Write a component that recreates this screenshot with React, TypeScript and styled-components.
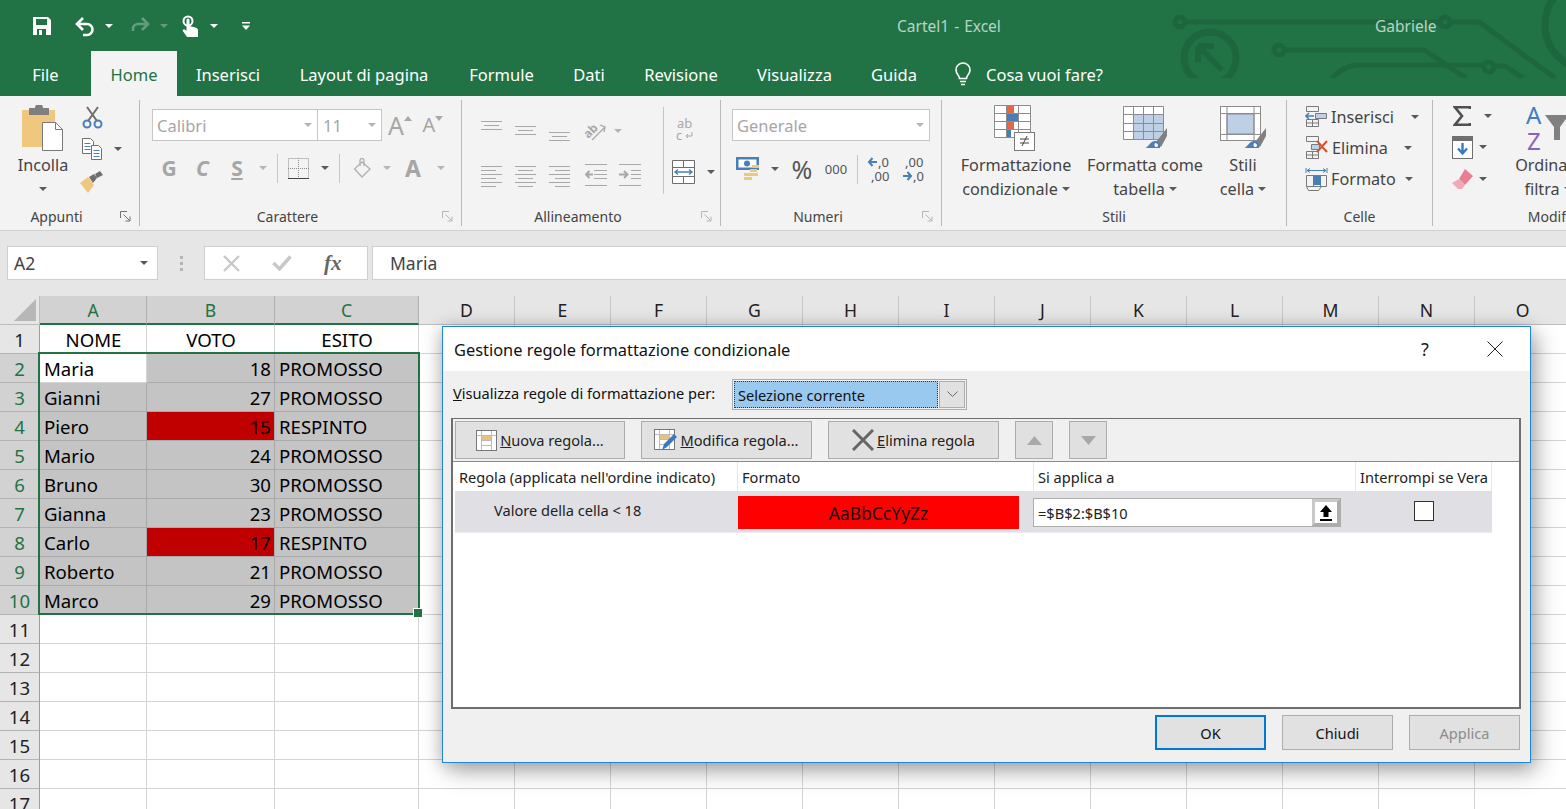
import React from "react";
import styled, { createGlobalStyle } from "styled-components";

const FONT = `"Noto Sans", "Open Sans", sans-serif`;
const GREEN = "#217346";
const GRID = "#d4d4d4";

const Global = createGlobalStyle`
  html, body { margin: 0; padding: 0; background: #fff; overflow: hidden; }
  * { box-sizing: border-box; }
  body { font-family: ${FONT}; }
`;

const Page = styled.div`
  position: relative; width: 1566px; height: 809px; overflow: hidden; background: #fff; color: #444;
`;

/* ---------- header ---------- */
const Header = styled.header`
  position: relative; height: 96px; background: ${GREEN}; color: #fff; overflow: hidden;
`;
const CircuitArt = styled.svg`
  position: absolute; left: 1160px; top: 0; width: 406px; height: 78px; pointer-events: none;
`;
const TitleRow = styled.div`
  position: relative; height: 51px; display: flex; align-items: center; padding-left: 32px;
`;
const QatSlot = styled.div<{ $w: number; $faded?: boolean }>`
  width: ${(p) => p.$w}px; display: flex; align-items: center; justify-content: flex-start;
  opacity: ${(p) => (p.$faded ? 0.3 : 1)};
`;
const DocTitle = styled.div`
  margin-left: 642px; width: 300px; font-size: 15.5px; color: #b9d3c3; white-space: nowrap; word-spacing: 1px;
`;
const UserName = styled.div`
  margin-left: 178px; font-size: 15.5px; color: #b9d3c3; white-space: nowrap;
`;
const TabRow = styled.nav`
  position: relative; height: 45px; display: flex; align-items: stretch;
`;
const Tab = styled.div<{ $w: number; $active?: boolean }>`
  width: ${(p) => p.$w}px; display: flex; align-items: center; justify-content: center;
  font-size: 16.5px; padding-top: 1px; white-space: nowrap;
  background: ${(p) => (p.$active ? "#f3f3f3" : "transparent")};
  color: ${(p) => (p.$active ? GREEN : "#fff")};
`;
const TellMe = styled.div`
  display: flex; align-items: center; gap: 12px; margin-left: 15px; font-size: 16.5px; padding-top: 1px; white-space: nowrap;
`;

/* ---------- ribbon ---------- */
const Ribbon = styled.section`
  height: 135px; display: flex; align-items: flex-start; background: #f3f3f3; border-bottom: 1px solid #d0d0d0; overflow: hidden;
`;
const Group = styled.div<{ $w: number; $last?: boolean }>`
  flex: 0 0 ${(p) => p.$w}px; height: 126px; margin-top: 4px; display: flex; flex-direction: column;
  border-right: ${(p) => (p.$last ? "none" : "1px solid #b9b9b9")};
`;
const GroupBody = styled.div<{ $pl?: number; $col?: boolean; $pt?: number }>`
  height: 107px; display: flex; flex-direction: ${(p) => (p.$col ? "column" : "row")};
  padding-left: ${(p) => p.$pl ?? 0}px; padding-top: ${(p) => p.$pt ?? 0}px;
`;
const GroupFoot = styled.div`
  height: 19px; display: flex; align-items: center;
`;
const GroupLabel = styled.div`
  flex: 1; text-align: center; font-size: 14px; color: #444; white-space: nowrap;
`;
const LauncherBox = styled.div`
  flex: 0 0 26px; display: flex; align-items: center; justify-content: center; padding-right: 2px;
`;
const Row = styled.div<{ $h: number; $mt?: number }>`
  height: ${(p) => p.$h}px; margin-top: ${(p) => p.$mt ?? 0}px; display: flex; align-items: center; flex: 0 0 auto;
`;
const Stack = styled.div<{ $w?: number; $pt?: number }>`
  display: flex; flex-direction: column; ${(p) => (p.$w ? `flex: 0 0 ${p.$w}px;` : "")}
  padding-top: ${(p) => p.$pt ?? 0}px;
`;
const Slot = styled.div<{ $w: number }>`
  flex: 0 0 ${(p) => p.$w}px; display: flex; align-items: center; justify-content: center;
`;
const Caret = styled.span<{ $off?: boolean; $ml?: number }>`
  display: inline-block; width: 0; height: 0; flex: none;
  margin-left: ${(p) => p.$ml ?? 0}px;
  border-left: 4px solid transparent; border-right: 4px solid transparent;
  border-top: 4px solid ${(p) => (p.$off ? "#b5b5b5" : "#5a5a5a")};
`;
const VSep = styled.div<{ $h: number; $ml?: number }>`
  width: 1px; height: ${(p) => p.$h}px; background: #c6c6c6; margin-left: ${(p) => p.$ml ?? 0}px;
`;
const BigBtn = styled.div<{ $w: number; $nudge?: number }>`
  flex: 0 0 ${(p) => p.$w}px; display: flex; flex-direction: column; align-items: center; white-space: nowrap;
  font-size: 16.2px; line-height: 24px; color: #444;
`;
const BigIcon = styled.div`
  height: 50px; margin-top: 3px; display: flex; align-items: center; justify-content: center;
`;
const BigLine = styled.div`
  height: 24px; display: flex; align-items: center; gap: 4px;
`;
const Combo = styled.div<{ $w: number }>`
  width: ${(p) => p.$w}px; height: 32px; background: #fff; border: 1px solid #c6c6c6;
  display: flex; align-items: center; justify-content: space-between; padding: 0 5px 0 4px;
  font-size: 16.5px; color: #a6a6a6;
`;
const GrayLetter = styled.span<{ $size?: number; $bold?: boolean; $italic?: boolean; $under?: boolean; $color?: string }>`
  font-size: ${(p) => p.$size ?? 20}px; font-weight: ${(p) => (p.$bold ? 700 : 400)}; line-height: 1;
  font-style: ${(p) => (p.$italic ? "italic" : "normal")};
  text-decoration: ${(p) => (p.$under ? "underline" : "none")};
  color: ${(p) => p.$color ?? "#a6a6a6"};
`;
const CellAction = styled.div`
  height: 31px; display: flex; align-items: center; gap: 3px; font-size: 16.2px; color: #444; white-space: nowrap;
`;

/* ---------- formula bar ---------- */
const FormulaBar = styled.section`
  height: 65px; background: #e6e6e6; display: flex; padding: 15px 0 0 7px; align-items: flex-start;
`;
const NameBox = styled.div`
  width: 151px; height: 34px; background: #fff; border: 1px solid #cfcfcf; display: flex; align-items: center;
  justify-content: space-between; padding: 0 9px 0 6px; font-size: 17.5px; color: #444;
`;
const Dots = styled.div`
  width: 46px; height: 34px; display: flex; flex-direction: column; align-items: center; justify-content: center; gap: 3px;
  & > i { width: 3px; height: 3px; background: #b4b4b4; display: block; }
`;
const FxBox = styled.div`
  width: 164px; height: 34px; background: #fff; border: 1px solid #cfcfcf; display: flex; align-items: center;
  padding-left: 18px; gap: 32px; margin-right: 4px;
`;
const FormulaInput = styled.div`
  flex: 1; height: 34px; background: #fff; border: 1px solid #cfcfcf; border-right: none; display: flex; align-items: center;
  padding-left: 17px; font-size: 17.5px; color: #444;
`;

/* ---------- sheet ---------- */
const SheetGrid = styled.div`
  display: grid; grid-template-columns: 40px 107px 128px 144px repeat(12, 96px);
  grid-auto-rows: 29px; width: 1571px; font-size: 18.6px; color: #000;
`;
const Corner = styled.div`
  background: #e6e6e6; border-right: 1px solid #bdbdbd; border-bottom: 1px solid #bdbdbd; position: relative;
  display: flex; align-items: flex-end; justify-content: flex-end; padding: 0 3px 3px 0;
`;
const ColHead = styled.div<{ $sel?: boolean }>`
  display: flex; align-items: center; justify-content: center; font-size: 17.6px;
  background: ${(p) => (p.$sel ? "#d2d2d2" : "#e6e6e6")};
  color: ${(p) => (p.$sel ? GREEN : "#222")};
  border-right: 1px solid ${(p) => (p.$sel ? "#b0b0b0" : "#c6c6c6")};
  border-bottom: ${(p) => (p.$sel ? `2px solid ${GREEN}` : "1px solid #bdbdbd")};
`;
const RowHead = styled.div<{ $sel?: boolean }>`
  display: flex; align-items: center; justify-content: center; font-size: 18.6px; padding-left: 0;
  background: ${(p) => (p.$sel ? "#d2d2d2" : "#e6e6e6")};
  color: ${(p) => (p.$sel ? GREEN : "#222")};
  border-right: 1px solid #9f9f9f;
  border-bottom: 1px solid #b4b4b4;
`;
const Cell = styled.div<{ $kind: "plain" | "dim" | "red"; $align?: string }>`
  display: flex; align-items: center; white-space: nowrap; padding: 0 3px 0 4px;
  justify-content: ${(p) => p.$align ?? "flex-start"};
  background: ${(p) => (p.$kind === "dim" ? "#c4c4c4" : p.$kind === "red" ? "#c00000" : "#fff")};
  border-right: 1px solid ${(p) => (p.$kind === "plain" ? GRID : "#a9a9a9")};
  border-bottom: 1px solid ${(p) => (p.$kind === "plain" ? GRID : "#a9a9a9")};
`;
const Selection = styled.div`
  position: absolute; left: 38px; top: 352px; width: 382px; height: 263px;
  border: 2px solid ${GREEN}; pointer-events: none;
  &::after {
    content: ""; position: absolute; right: -5px; bottom: -5px; width: 8px; height: 8px;
    background: ${GREEN}; border: 1px solid #fff;
  }
`;

/* ---------- dialog ---------- */
const Dialog = styled.div`
  position: absolute; left: 442px; top: 326px; width: 1089px; height: 437px; background: #f0f0f0;
  border: 1px solid #1f86d6; box-shadow: 6px 8px 22px rgba(0,0,0,.3), -2px 2px 16px rgba(0,0,0,.18);
  display: flex; flex-direction: column; font-size: 14.6px; color: #111;
`;
const DialogTitle = styled.div`
  height: 44px; flex: none; background: #fff; display: flex; align-items: center; padding-left: 11px; font-size: 16.4px; color: #111;
`;
const HelpMark = styled.div`
  margin-left: auto; font-size: 18px; width: 70px; text-align: center; color: #222;
`;
const CloseMark = styled.div`
  width: 70px; display: flex; justify-content: center; margin-right: 0;
`;
const ViewRow = styled.div`
  height: 47px; flex: none; display: flex; align-items: center; padding-left: 10px;
`;
const ViewLabel = styled.div`
  width: 279px; font-size: 14.6px; padding-bottom: 3px; white-space: nowrap;
`;
const SelectWrap = styled.div`
  width: 235px; height: 31px; border: 1px solid #adadad; background: #f0f0f0; display: flex; padding: 1px; gap: 1px;
`;
const SelectValue = styled.div`
  flex: 1; background: #99c9ef; border: 1px dotted #333; display: flex; align-items: center; padding-left: 3px; font-size: 14.6px;
`;
const SelectArrow = styled.div`
  width: 26px; background: #e1e1e1; border: 1px solid #adadad; display: flex; align-items: center; justify-content: center;
`;
const Panel = styled.div`
  margin-left: 8px; width: 1070px; height: 291px; flex: none; border: 2px solid #6e6e6e; border-top-width: 1px; display: flex; flex-direction: column;
`;
const PanelBar = styled.div`
  height: 42px; flex: none; display: flex; align-items: center; gap: 16px; padding: 0 0 0 2px; background: #f0f0f0;
`;
const ToolBtn = styled.div<{ $w: number; $off?: boolean }>`
  width: ${(p) => p.$w}px; height: 38px; background: ${(p) => (p.$off ? "#e0e0e0" : "#e1e1e1")}; border: 1px solid #adadad;
  display: flex; align-items: center; justify-content: center; gap: 3px; font-size: 14.6px; white-space: nowrap; color: #222;
`;
const RuleTable = styled.div`
  flex: 1; background: #fff; border-top: 1px solid #8a8a8a; padding-left: 2px;
`;
const RuleHead = styled.div`
  display: grid; grid-template-columns: 283px 296px 322px 136px; height: 29px; width: 1037px; font-size: 14.6px;
`;
const RuleHeadCell = styled.div`
  display: flex; align-items: center; padding-left: 4px; white-space: nowrap; border-right: 1px solid #e6e6e6; color: #222;
`;
const RuleRow = styled.div`
  display: grid; grid-template-columns: 283px 296px 322px 136px; height: 42px; width: 1037px; background: #dfdfe4; border-bottom: 1px solid #ececec;
`;
const RuleName = styled.div`
  display: flex; align-items: center; padding: 0 0 4px 39px; font-size: 14.6px; color: #222; white-space: nowrap;
`;
const Swatch = styled.div`
  margin-top: 5px; width: 281px; height: 33px; background: #f00; color: #111; font-size: 17.5px; display: flex; align-items: center; justify-content: center;
`;
const RangeWrap = styled.div`
  margin: 7px 0 0 -1px; width: 308px; height: 29px; display: flex; border: 1px solid #adadad; background: #fff;
`;
const RangeInput = styled.div`
  flex: 1; display: flex; align-items: center; padding-left: 4px; font-size: 14.6px; color: #222;
`;
const RangeBtn = styled.div`
  width: 28px; background: #fff; border: 3px solid #c9c9c9; border-right-color: #adadad; border-bottom-color: #adadad; display: flex; align-items: center; justify-content: center;
`;
const StopCell = styled.div`
  display: flex; justify-content: center; padding: 10px 0 0 0;
`;
const CheckBox = styled.div`
  width: 20px; height: 20px; background: #fff; border: 1px solid #333;
`;
const DialogFoot = styled.div`
  flex: 1; display: flex; justify-content: flex-end; align-items: flex-start; gap: 16px; padding: 6px 10px 0 0;
`;
const FootBtn = styled.div<{ $primary?: boolean; $off?: boolean }>`
  width: 111px; height: 35px; background: #e1e1e1; display: flex; align-items: center; justify-content: center; font-size: 14.6px;
  border: ${(p) => (p.$primary ? "2px solid #0078d7" : "1px solid #adadad")};
  color: ${(p) => (p.$off ? "#8c8c8c" : "#111")};
`;

/* ---------- icons ---------- */
const Circuit = () => (
  <CircuitArt viewBox="0 0 406 78">
    <g fill="none" stroke="#1d663e" strokeWidth="5">
      <circle cx="20" cy="22" r="5" />
      <path d="M25 22H280" />
      <circle cx="285" cy="22" r="5" />
      <path d="M290 22H319L395 78" />
      <circle cx="119" cy="50" r="5" />
      <path d="M124 50H264L306 78" />
      <path d="M172 78Q184 65 200 65H324" />
      <circle cx="329" cy="67" r="5" />
      <path d="M334 66H345L363 78" />
      <circle cx="430" cy="25" r="45" strokeWidth="7" />
      <circle cx="50" cy="58" r="26" strokeWidth="7" />
      <path d="M38 46L62 70M38 46H54M38 46V62" strokeWidth="6" />
    </g>
  </CircuitArt>
);
const SaveIcon = () => (
  <svg width="20" height="20" viewBox="0 0 20 20"><path fillRule="evenodd" fill="#fff" d="M1 1h15l3 3v15H1zM4 3v6h11V3zM5 13v6h9v-6z" /><rect x="7" y="14" width="3" height="5" fill="#fff" /></svg>
);
const UndoIcon = () => (
  <svg width="22" height="22" viewBox="0 0 22 22" fill="none" stroke="#fff" strokeWidth="2.6"><path d="M9 3L3 9l6 6" /><path d="M3 9h10a5.2 5.2 0 0 1 0 11H9" /></svg>
);
const RedoIcon = () => (
  <svg width="22" height="22" viewBox="0 0 22 22" fill="none" stroke="#fff" strokeWidth="2.6"><path d="M13 3l6 6-6 6" /><path d="M19 9H9a5 5 0 0 0-5 5v2" /></svg>
);
const TouchIcon = () => (
  <svg width="18" height="22" viewBox="0 0 18 22"><circle cx="6" cy="6" r="4.5" fill="none" stroke="#fff" strokeWidth="2" /><path fill="#fff" d="M4.5 5a1.5 1.5 0 0 1 3 0v6l6 1.5c1.5.4 2.5 1.4 2.5 3V22H5L.5 15.5 2 14l2.5 2z" /></svg>
);
const QatMore = () => (
  <svg width="10" height="10" viewBox="0 0 10 10" fill="#fff"><rect x="1" y="1" width="8" height="1.5" /><path d="M1 4.5h8L5 9z" /></svg>
);
const BulbIcon = () => (
  <svg width="22" height="26" viewBox="0 0 22 26" fill="none" stroke="#fff" strokeWidth="1.6"><path d="M7.5 17.5c0-3-3.5-4.5-3.5-8.5a7 7 0 0 1 14 0c0 4-3.500 5.500-3.500 8.500z" /><path d="M8 20.500h6M9 23.500h4" /></svg>
);
const PasteIcon = () => (
  <svg width="42" height="46" viewBox="0 0 42 46"><rect x="0" y="5" width="33" height="37" fill="#efc77f" /><path fill="#7f7f7f" d="M7 3h6a4 4 0 0 1 8 0h6v7H7z" /><path fill="#fff" stroke="#7a7a7a" d="M20.500 17.500h13l7 7v21h-20z" /><path fill="none" stroke="#7a7a7a" d="M33.500 17.500v7h7" /></svg>
);
const CutIcon = () => (
  <svg width="21" height="23" viewBox="0 0 21 23" fill="none"><path stroke="#6e6e6e" strokeWidth="2" d="M5 1l10 14M16 1L6 15" /><circle cx="5" cy="18" r="3.500" stroke="#4a7fb5" strokeWidth="2" /><circle cx="16" cy="18" r="3.500" stroke="#4a7fb5" strokeWidth="2" /></svg>
);
const CopyIcon = () => (
  <svg width="21" height="22" viewBox="0 0 21 22"><path fill="#fff" stroke="#707070" d="M.5.500h8l3 3v12H.5z" /><path fill="#fff" stroke="#707070" d="M9.500 7.500h7l3 3v11h-10z" /><path stroke="#4a7fb5" d="M2.500 5.500h6M2.500 8.500h6M2.500 11.500h6M11.500 12.500h6M11.500 15.500h6M11.500 18.500h6" /></svg>
);
const BrushIcon = () => (
  <svg width="24" height="22" viewBox="0 0 24 22"><path fill="#efc77f" d="M0 12l8-6 6 8-6 8z" /><path fill="#6e6e6e" d="M9 6l5-3 3 4-4 5zM15 3l5-3 3 4-6 3z" /></svg>
);
const Launcher = ({ off }: { off?: boolean }) => (
  <svg width="11" height="11" viewBox="0 0 11 11" fill="none" stroke={off ? "#b5b5b5" : "#707070"}><path d="M.5 7V.5H7" /><path d="M3.500 3.500l6 6M10 5.500V10H5.500" /></svg>
);
const BordersIcon = () => (
  <svg width="21" height="21" viewBox="0 0 21 21" fill="none" stroke="#8a8a8a" strokeDasharray="1 1"><path d="M.5.500h20v20H.5zM10.500 0v21M0 10.500h21" /><path d="M0 20.500h21" stroke="#444" strokeDasharray="none" /></svg>
);
const BucketIcon = () => (
  <svg width="19" height="21" viewBox="0 0 19 21" fill="none" stroke="#b0b0b0" strokeWidth="1.300"><path d="M9 4L1.500 11 9 19l8-8z" /><path d="M7 8V2.500a2 2 0 0 1 4 0V8" /></svg>
);
const LinesIcon = ({ pat }: { pat: number[][] }) => (
  <svg width="21" height="24" viewBox="0 0 21 24" stroke="#a8a8a8">{pat.map(([a, b, y]) => <path key={y} d={`M${a} ${y}.5H${b}`} />)}</svg>
);
const OrientIcon = () => (
  <svg width="24" height="22" viewBox="0 0 24 22" fill="none" stroke="#a8a8a8" strokeWidth="1.300"><text x="1" y="15" fontSize="12" fontFamily={FONT} fontWeight="700" fill="#a8a8a8" stroke="none" transform="rotate(-45 8 12)">ab</text><path d="M9 20L22 7M17 5l5 2-1 5" /></svg>
);
const IndentIcon = ({ dir }: { dir: "l" | "r" }) => (
  <svg width="22" height="22" viewBox="0 0 22 22" fill="none">
    <path stroke="#a8a8a8" d={dir === "l" ? "M0 .5h22M9 6.500h13M9 10.500h13M9 14.500h13M0 21.500h22" : "M0 .5h22M12 6.500h10M12 10.500h10M12 14.500h10M0 21.500h22"} />
    <path stroke="#a8a8a8" strokeWidth="2" d={dir === "l" ? "M8 10.500H1M4.500 7L1 10.500 4.500 14" : "M0 10.500h8M5 7l3.500 3.500L5 14"} />
  </svg>
);
const WrapIcon = () => (
  <svg width="20" height="24" viewBox="0 0 20 24"><text x="2" y="10" fontSize="13" fontFamily={FONT} fill="#a8a8a8">ab</text><text x="1" y="22" fontSize="13" fontFamily={FONT} fill="#a8a8a8">c</text><path d="M17 14v4h-6M13 16l-2 2 2 2" fill="none" stroke="#a8a8a8" /></svg>
);
const MergeIcon = () => (
  <svg width="24" height="24" viewBox="0 0 24 24" fill="#fff" stroke="#6e6e6e"><path d="M.5.500h22v23H.5zM.5 7.500h22M.5 16.500h22M11.500.500v7M11.500 16.500v7" /><path fill="none" stroke="#4a7fb5" strokeWidth="1.400" d="M3 12h17M6 9.500L3 12l3 2.500M17 9.500l3 2.500-3 2.500" /></svg>
);
const CurrencyIcon = () => (
  <svg width="24" height="24" viewBox="0 0 24 24"><rect x="0" y="0" width="23" height="13" fill="#4a7fb5" /><rect x="2.500" y="2.500" width="18" height="8" fill="#fff" /><circle cx="11" cy="6.500" r="3" fill="#4a7fb5" /><path fill="#efc77f" d="M16 8h7v3h-7zM14 12h7v3h-7zM15 16h7v3h-7zM8 16h8v3H8zM8 20h8v3H8z" /></svg>
);
const DecimalIcon = ({ dir }: { dir: "inc" | "dec" }) => (
  <svg width="24" height="28" viewBox="0 0 24 28" fontFamily={FONT} fontSize="13" fill="#555">
    {dir === "inc" ? (
      <>
        <text x="11" y="12">,0</text>
        <text x="4" y="26">,00</text>
        <path d="M10 7H2M5.500 3L2 7l3.500 4" fill="none" stroke="#4a7fb5" strokeWidth="2" />
      </>
    ) : (
      <>
        <text x="3" y="12">,00</text>
        <text x="11" y="26">,0</text>
        <path d="M1 21h8M5.500 17L9 21l-3.500 4" fill="none" stroke="#4a7fb5" strokeWidth="2" />
      </>
    )}
  </svg>
);
const GridLines = ({ x, y, w, h, cols, rows }: { x: number; y: number; w: number; h: number; cols: number; rows: number }) => {
  let d = `M${x}.5 ${y}.5h${w}v${h}h-${w}z`;
  for (let i = 1; i < cols; i++) d += `M${x + Math.round((w * i) / cols)}.5 ${y}v${h}`;
  for (let i = 1; i < rows; i++) d += `M${x} ${y + Math.round((h * i) / rows)}.5h${w}`;
  return <path d={d} fill="none" stroke="#8c8c8c" />;
};
const CondIcon = () => (
  <svg width="44" height="46" viewBox="0 0 44 46">
    <rect x="0.500" y="0.500" width="36" height="32" fill="#fff" />
    <path fill="#e06a48" d="M12 1h8v7h-8zM12 17h8v7h-8z" /><path fill="#4a7fb5" d="M12 9h13v7H12zM12 25h5v7h-5z" />
    <GridLines x={0} y={0} w={36} h={32} cols={3} rows={4} />
    <rect x="20.500" y="27.500" width="20" height="18" fill="#fff" stroke="#7a7a7a" />
    <path d="M26 34h9M26 38h9M33 31l-5 10" stroke="#444" fill="none" />
  </svg>
);
const BrushTail = ({ x, y }: { x: number; y: number }) => (
  <g transform={`translate(${x} ${y})`}>
    <path fill="#808080" d="M10 14l11-14v8L15 19z" />
    <path fill="#4a7fb5" d="M9 13c3 0 6 2 5 7H-1c4-1 5-7 10-7z" />
    <path fill="#fff" d="M9 15c1.500 0 3 1 3 2.500 0 1-1 1.500-2 1.500-1.500 0-2-2-1-4z" />
  </g>
);
const TableIcon = () => (
  <svg width="44" height="44" viewBox="0 0 44 44">
    <rect x="0.500" y="0.500" width="40" height="33" fill="#fff" />
    <rect x="11" y="9" width="30" height="25" fill="#bdd0e5" />
    <GridLines x={0} y={0} w={40} h={33} cols={4} rows={4} />
    <BrushTail x={23} y={22} />
  </svg>
);
const CellStyleIcon = () => (
  <svg width="46" height="44" viewBox="0 0 46 44">
    <rect x="0.500" y="0.500" width="40" height="34" fill="#fff" stroke="#8c8c8c" />
    <rect x="7" y="8" width="27" height="20" fill="#bdd0e5" stroke="#8c8c8c" />
    <path d="M0 7.500h40M0 28.500h40M7 0v34M34 0v34" stroke="#8c8c8c" />
    <BrushTail x={25} y={22} />
  </svg>
);
const InsertIcon = () => (
  <svg width="23" height="22" viewBox="0 0 23 22" fill="none" stroke="#7a7a7a"><path d="M1.500.500h12v5h-12zM1.500 13.500h12v7h-12zM7.500 13.500v7M1.500 17h12" /><path fill="#bdd0e5" d="M10.500 7.500h11v5h-11z" /><path d="M9 10H1M4 7L1 10l3 3" stroke="#4a7fb5" strokeWidth="1.600" /></svg>
);
const DeleteIcon = () => (
  <svg width="24" height="23" viewBox="0 0 24 23" fill="none" stroke="#7a7a7a"><path d="M1.500.500h12v5h-12zM1.500 15.500h12v7h-12zM7.500 15.500v7M1.500 19h12" /><path fill="#bdd0e5" d="M6.500 8.500h8v5h-8z" /><path d="M12 5l10 11M22 5L12 16" stroke="#d8522e" strokeWidth="2" /></svg>
);
const FormatIcon = () => (
  <svg width="23" height="24" viewBox="0 0 23 24" fill="none" stroke="#7a7a7a"><path d="M1.500 8.500h20v11h-20zM8.500 8.500v11M15.500 8.500v11M1.500 19.500l2 4h10l3-4" /><rect x="8" y="9" width="8" height="9" fill="#4a7fb5" stroke="none" /><path d="M1 1v5M22 1v5M2 3.500h19M5 1.500L2 3.500 5 5.500M18 1.500l3 2-3 2" stroke="#4a7fb5" /></svg>
);
const SigmaIcon = () => (
  <svg width="18" height="20" viewBox="0 0 18 20" fill="none" stroke="#505050" strokeWidth="2.600"><path d="M17 3V1.300H2L9 10 2 18.700h15V17" /></svg>
);
const FillIcon = () => (
  <svg width="21" height="23" viewBox="0 0 21 23"><rect x="0.500" y="0.500" width="20" height="22" fill="#fff" stroke="#6e6e6e" /><rect x="0" y="0" width="21" height="5" fill="#6e6e6e" /><path d="M10.500 7v10M6 12.500l4.500 5 4.500-5" fill="none" stroke="#3c78c0" strokeWidth="2.400" /></svg>
);
const EraserIcon = () => (
  <svg width="21" height="21" viewBox="0 0 21 21"><path fill="#e97f93" d="M13 0l8 7-8 9-6-6z" /><path fill="#f1a9b6" d="M7 10l6 6-3 4H6l-6-6z" /></svg>
);
const SortIcon = () => (
  <svg width="44" height="52" viewBox="0 0 44 52">
    <text x="0" y="22" fontSize="24" fontFamily={FONT} fill="#3f7cc0">A</text>
    <text x="1" y="48" fontSize="24" fontFamily={FONT} fill="#8c62b8">Z</text>
    <path fill="#808080" d="M19 13h24l-9 12v13h-6V25z" />
  </svg>
);
const XIcon = () => (
  <svg width="17" height="17" viewBox="0 0 17 17" stroke="#c8c8c8" strokeWidth="2.400"><path d="M1 1l15 15M16 1L1 16" /></svg>
);
const CheckIcon = () => (
  <svg width="20" height="16" viewBox="0 0 20 16" fill="none" stroke="#c8c8c8" strokeWidth="3.500"><path d="M1.500 8l6 6L18.500 1.500" /></svg>
);
const FxLabel = styled.span`
  font-family: "Liberation Serif", serif; font-style: italic; font-weight: 700; font-size: 21px; color: #666; line-height: 1;
`;
const SmallChevron = () => (
  <svg width="11" height="7" viewBox="0 0 11 7" fill="none" stroke="#666"><path d="M.5.500l5 5 5-5" /></svg>
);
const CloseX = () => (
  <svg width="16" height="16" viewBox="0 0 16 16" stroke="#222"><path d="M.5.500l15 15M15.500.500l-15 15" /></svg>
);
const NewRuleIcon = () => (
  <svg width="21" height="21" viewBox="0 0 21 21"><rect x="0.500" y="0.500" width="20" height="20" fill="#fff" stroke="#777" /><rect x="5" y="5" width="11" height="5" fill="#e8c27c" /><path d="M5 10.500h11M5 15.500h11M5.500 1v19M15.500 1v19M1 5.500h19" stroke="#bbb" /></svg>
);
const EditRuleIcon = () => (
  <svg width="23" height="22" viewBox="0 0 23 22"><rect x="0.500" y="0.500" width="20" height="20" fill="#fff" stroke="#777" /><rect x="5" y="5" width="11" height="5" fill="#e8c27c" /><path d="M5 10.500h11M5 15.500h11M5.500 1v19M15.500 1v19M1 5.500h19" stroke="#bbb" /><path d="M8 21l2-6L20 5l3 3-10 10z" fill="#3c78c0" /></svg>
);
const DeleteRuleIcon = () => (
  <svg width="22" height="22" viewBox="0 0 22 22" stroke="#666" strokeWidth="3"><path d="M1 1l20 20M21 1L1 21" /></svg>
);
const TriUp = () => <svg width="15" height="9" viewBox="0 0 15 9" fill="#a8a8a8"><path d="M7.500 0L15 9H0z" /></svg>;
const TriDown = () => <svg width="15" height="9" viewBox="0 0 15 9" fill="#a8a8a8"><path d="M0 0h15L7.500 9z" /></svg>;
const RangeArrow = () => (
  <svg width="14" height="16" viewBox="0 0 14 16" fill="#000"><path d="M7 0l6 7H9.500v5h-5V7H1z" /><rect x="1" y="14" width="12" height="2" /></svg>
);

/* ---------- data ---------- */
const TABS: [string, number][] = [
  ["File", 91], ["Home", 86], ["Inserisci", 102], ["Layout di pagina", 170], ["Formule", 105],
  ["Dati", 70], ["Revisione", 114], ["Visualizza", 113], ["Guida", 86],
];
const COLS = "ABCDEFGHIJKLMNO".split("");
const PEOPLE: [string, number, string][] = [
  ["Maria", 18, "PROMOSSO"], ["Gianni", 27, "PROMOSSO"], ["Piero", 15, "RESPINTO"],
  ["Mario", 24, "PROMOSSO"], ["Bruno", 30, "PROMOSSO"], ["Gianna", 23, "PROMOSSO"],
  ["Carlo", 17, "RESPINTO"], ["Roberto", 21, "PROMOSSO"], ["Marco", 29, "PROMOSSO"],
];
const HEAD = ["NOME", "VOTO", "ESITO"];
const L_TOP = [[0, 20, 7], [0, 20, 11], [0, 20, 15]];

const Sheet = () => {
  const cells: React.ReactNode[] = [];
  cells.push(
    <Corner key="corner">
      <svg width="22" height="22" viewBox="0 0 22 22"><path fill="#b7b7b7" d="M22 0v22H0z" /></svg>
    </Corner>
  );
  COLS.forEach((c, i) => cells.push(<ColHead key={c} $sel={i < 3}>{c}</ColHead>));
  for (let r = 1; r <= 17; r++) {
    const sel = r >= 2 && r <= 10;
    cells.push(<RowHead key={`r${r}`} $sel={sel}>{r}</RowHead>);
    COLS.forEach((c, i) => {
      const key = `${c}${r}`;
      if (i > 2) { cells.push(<Cell key={key} $kind="plain" />); return; }
      if (r === 1) { cells.push(<Cell key={key} $kind="plain" $align="center">{HEAD[i]}</Cell>); return; }
      if (!sel) { cells.push(<Cell key={key} $kind="plain" />); return; }
      const p = PEOPLE[r - 2];
      if (i === 0) cells.push(<Cell key={key} $kind={r === 2 ? "plain" : "dim"}>{p[0]}</Cell>);
      if (i === 1) cells.push(<Cell key={key} $kind={p[1] < 18 ? "red" : "dim"} $align="flex-end">{p[1]}</Cell>);
      if (i === 2) cells.push(<Cell key={key} $kind="dim">{p[2]}</Cell>);
    });
  }
  return <SheetGrid>{cells}</SheetGrid>;
};

export default function App() {
  return (
    <Page>
      <Global />
      <Header>
        <Circuit />
        <TitleRow>
          <QatSlot $w={42}><SaveIcon /></QatSlot>
          <QatSlot $w={31}><UndoIcon /></QatSlot>
          <QatSlot $w={24}><Caret style={{ borderTopColor: "#fff" }} /></QatSlot>
          <QatSlot $w={31} $faded><RedoIcon /></QatSlot>
          <QatSlot $w={22} $faded><Caret style={{ borderTopColor: "#fff" }} /></QatSlot>
          <QatSlot $w={28}><TouchIcon /></QatSlot>
          <QatSlot $w={31}><Caret style={{ borderTopColor: "#fff" }} /></QatSlot>
          <QatSlot $w={14}><QatMore /></QatSlot>
          <DocTitle>Cartel1  -  Excel</DocTitle>
          <UserName>Gabriele</UserName>
        </TitleRow>
        <TabRow>
          {TABS.map(([t, w]) => <Tab key={t} $w={w} $active={t === "Home"}>{t}</Tab>)}
          <TellMe><BulbIcon />Cosa vuoi fare?</TellMe>
        </TabRow>
      </Header>

      <Ribbon>
        <Group $w={140}>
          <GroupBody $pl={12}>
            <BigBtn $w={62}>
              <BigIcon><PasteIcon /></BigIcon>
              <BigLine>Incolla</BigLine>
              <BigLine><Caret /></BigLine>
            </BigBtn>
            <Stack $pt={1}>
              <Row $h={32}><Slot $w={36}><CutIcon /></Slot></Row>
              <Row $h={32}><Slot $w={36}><CopyIcon /></Slot><Caret $ml={4} /></Row>
              <Row $h={33}><Slot $w={36}><BrushIcon /></Slot></Row>
            </Stack>
          </GroupBody>
          <GroupFoot><GroupLabel>Appunti</GroupLabel><LauncherBox><Launcher /></LauncherBox></GroupFoot>
        </Group>

        <Group $w={322}>
          <GroupBody $col $pl={12} $pt={9}>
            <Row $h={32}>
              <Combo $w={166}>Calibri<Caret $off /></Combo>
              <Combo $w={64} style={{ borderLeft: "none", paddingLeft: 5 }}>11<Caret $off /></Combo>
              <Slot $w={36}><GrayLetter $size={25}>A</GrayLetter><svg width="8" height="5" style={{ marginBottom: 14 }} viewBox="0 0 8 5" fill="#a8a8a8"><path d="M4 0l4 5H0z" /></svg></Slot>
              <Slot $w={30}><GrayLetter $size={20}>A</GrayLetter><svg width="8" height="5" style={{ marginBottom: 14 }} viewBox="0 0 8 5" fill="#a8a8a8"><path d="M0 0h8L4 5z" /></svg></Slot>
            </Row>
            <Row $h={32} $mt={11}>
              <Slot $w={34}><GrayLetter $bold $size={21}>G</GrayLetter></Slot>
              <Slot $w={33}><GrayLetter $bold $italic $size={21}>C</GrayLetter></Slot>
              <Slot $w={36}><GrayLetter $bold $under $size={21}>S</GrayLetter></Slot>
              <Slot $w={16}><Caret $off /></Slot>
              <Slot $w={12}><VSep $h={29} /></Slot>
              <Slot $w={30}><BordersIcon /></Slot>
              <Slot $w={24}><Caret /></Slot>
              <Slot $w={4}><VSep $h={29} /></Slot>
              <Slot $w={42}><BucketIcon /></Slot>
              <Slot $w={8}><Caret $off /></Slot>
              <Slot $w={44}><GrayLetter $bold $size={23}>A</GrayLetter></Slot>
              <Slot $w={12}><Caret $off /></Slot>
            </Row>
          </GroupBody>
          <GroupFoot><GroupLabel>Carattere</GroupLabel><LauncherBox><Launcher off /></LauncherBox></GroupFoot>
        </Group>

        <Group $w={259}>
          <GroupBody $pl={12}>
            <Stack $w={183} $pt={15}>
              <Row $h={32}>
                <Slot $w={34}><svg width="21" height="24" viewBox="0 0 21 24" stroke="#a8a8a8"><path d="M0 2.500h21M3 6.500h15M0 10.500h21" /></svg></Slot>
                <Slot $w={34}><svg width="21" height="24" viewBox="0 0 21 24" stroke="#a8a8a8"><path d="M0 7.500h21M3 11.500h15M0 15.500h21" /></svg></Slot>
                <Slot $w={34}><svg width="21" height="24" viewBox="0 0 21 24" stroke="#a8a8a8"><path d="M0 13.500h21M3 17.500h15M0 21.500h21" /></svg></Slot>
                <Slot $w={38}><OrientIcon /></Slot>
                <Slot $w={8}><Caret $off /></Slot>
              </Row>
              <Row $h={32} $mt={12}>
                <Slot $w={34}><LinesIcon pat={[[0, 21, 3], [0, 15, 7], [0, 21, 11], [0, 15, 15], [0, 21, 19], [0, 15, 23]]} /></Slot>
                <Slot $w={34}><LinesIcon pat={[[0, 21, 3], [3, 18, 7], [0, 21, 11], [3, 18, 15], [0, 21, 19], [3, 18, 23]]} /></Slot>
                <Slot $w={34}><LinesIcon pat={[[0, 21, 3], [6, 21, 7], [0, 21, 11], [6, 21, 15], [0, 21, 19], [6, 21, 23]]} /></Slot>
                <Slot $w={40}><IndentIcon dir="l" /></Slot>
                <Slot $w={28}><IndentIcon dir="r" /></Slot>
              </Row>
            </Stack>
            <Stack $pt={7}><VSep $h={87} $ml={6} /></Stack>
            <Stack $pt={18}>
              <Row $h={24}><Slot $w={42}><WrapIcon /></Slot></Row>
              <Row $h={26} $mt={17}><Slot $w={40}><MergeIcon /></Slot><Slot $w={14}><Caret /></Slot></Row>
            </Stack>
          </GroupBody>
          <GroupFoot><GroupLabel>Allineamento</GroupLabel><LauncherBox><Launcher off /></LauncherBox></GroupFoot>
        </Group>

        <Group $w={221}>
          <GroupBody $col $pl={11} $pt={9}>
            <Row $h={32}><Combo $w={198}>Generale<Caret $off /></Combo></Row>
            <Row $h={32} $mt={12}>
              <Slot $w={32}><CurrencyIcon /></Slot>
              <Slot $w={22}><Caret /></Slot>
              <Slot $w={32}><GrayLetter $size={25} $color="#555">%</GrayLetter></Slot>
              <Slot $w={36}><GrayLetter $size={13} $color="#555">000</GrayLetter></Slot>
              <Slot $w={6}><VSep $h={29} /></Slot>
              <Slot $w={38}><DecimalIcon dir="inc" /></Slot>
              <Slot $w={32}><DecimalIcon dir="dec" /></Slot>
            </Row>
          </GroupBody>
          <GroupFoot><GroupLabel>Numeri</GroupLabel><LauncherBox><Launcher off /></LauncherBox></GroupFoot>
        </Group>

        <Group $w={345}>
          <GroupBody $pl={8}>
            <BigBtn $w={132}><BigIcon><CondIcon /></BigIcon><BigLine>Formattazione</BigLine><BigLine>condizionale<Caret /></BigLine></BigBtn>
            <BigBtn $w={126}><BigIcon><TableIcon /></BigIcon><BigLine>Formatta come</BigLine><BigLine>tabella<Caret /></BigLine></BigBtn>
            <BigBtn $w={70}><BigIcon><CellStyleIcon /></BigIcon><BigLine>Stili</BigLine><BigLine>cella<Caret /></BigLine></BigBtn>
          </GroupBody>
          <GroupFoot><GroupLabel>Stili</GroupLabel></GroupFoot>
        </Group>

        <Group $w={146}>
          <GroupBody $col $pl={18} $pt={1}>
            <CellAction><InsertIcon />Inserisci<Caret $ml={14} /></CellAction>
            <CellAction><DeleteIcon />Elimina<Caret $ml={13} /></CellAction>
            <CellAction><FormatIcon />Formato<Caret $ml={6} /></CellAction>
          </GroupBody>
          <GroupFoot><GroupLabel>Celle</GroupLabel></GroupFoot>
        </Group>

        <Group $w={246} $last>
          <GroupBody $pl={18}>
            <Stack $w={49} $pt={1}>
              <Row $h={30}><Slot $w={22}><SigmaIcon /></Slot><Caret $ml={11} /></Row>
              <Row $h={32}><Slot $w={22}><FillIcon /></Slot><Caret $ml={6} /></Row>
              <Row $h={32}><Slot $w={22}><EraserIcon /></Slot><Caret $ml={6} /></Row>
            </Stack>
            <BigBtn $w={96}><BigIcon><SortIcon /></BigIcon><BigLine>Ordina e</BigLine><BigLine>filtra<Caret /></BigLine></BigBtn>
          </GroupBody>
          <GroupFoot><GroupLabel>Modifica</GroupLabel></GroupFoot>
        </Group>
      </Ribbon>

      <FormulaBar>
        <NameBox>A2<Caret /></NameBox>
        <Dots><i /><i /><i /></Dots>
        <FxBox><XIcon /><CheckIcon /><FxLabel>fx</FxLabel></FxBox>
        <FormulaInput>Maria</FormulaInput>
      </FormulaBar>

      <Sheet />
      <Selection />

      <Dialog>
        <DialogTitle>
          Gestione regole formattazione condizionale
          <HelpMark>?</HelpMark>
          <CloseMark><CloseX /></CloseMark>
        </DialogTitle>
        <ViewRow>
          <ViewLabel><u>V</u>isualizza regole di formattazione per:</ViewLabel>
          <SelectWrap>
            <SelectValue>Selezione corrente</SelectValue>
            <SelectArrow><SmallChevron /></SelectArrow>
          </SelectWrap>
        </ViewRow>
        <Panel>
          <PanelBar>
            <ToolBtn $w={170}><NewRuleIcon /><span><u>N</u>uova regola...</span></ToolBtn>
            <ToolBtn $w={171}><EditRuleIcon /><span><u>M</u>odifica regola...</span></ToolBtn>
            <ToolBtn $w={171}><DeleteRuleIcon /><span><u>E</u>limina regola</span></ToolBtn>
            <ToolBtn $w={38} $off><TriUp /></ToolBtn>
            <ToolBtn $w={38} $off><TriDown /></ToolBtn>
          </PanelBar>
          <RuleTable>
            <RuleHead>
              <RuleHeadCell>Regola (applicata nell'ordine indicato)</RuleHeadCell>
              <RuleHeadCell>Formato</RuleHeadCell>
              <RuleHeadCell>Si applica a</RuleHeadCell>
              <RuleHeadCell>Interrompi se Vera</RuleHeadCell>
            </RuleHead>
            <RuleRow>
              <RuleName>Valore della cella &lt; 18</RuleName>
              <Swatch>AaBbCcYyZz</Swatch>
              <RangeWrap>
                <RangeInput>=$B$2:$B$10</RangeInput>
                <RangeBtn><RangeArrow /></RangeBtn>
              </RangeWrap>
              <StopCell><CheckBox /></StopCell>
            </RuleRow>
          </RuleTable>
        </Panel>
        <DialogFoot>
          <FootBtn $primary>OK</FootBtn>
          <FootBtn>Chiudi</FootBtn>
          <FootBtn $off>Applica</FootBtn>
        </DialogFoot>
      </Dialog>
    </Page>
  );
}
